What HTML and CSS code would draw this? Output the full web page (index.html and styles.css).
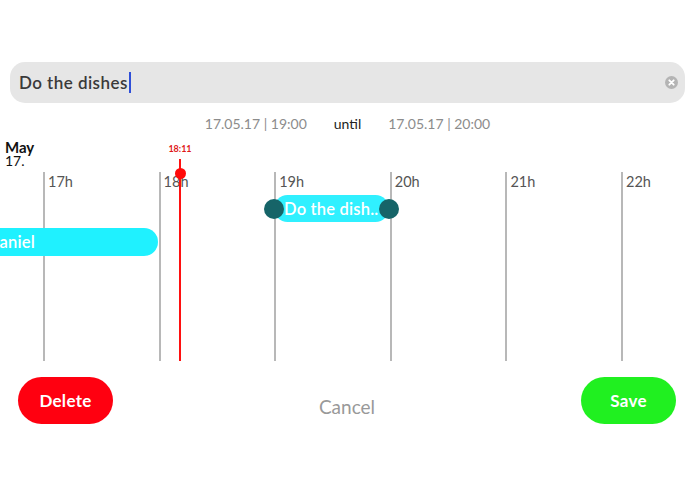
FILE: index.html
```html
<!DOCTYPE html>
<html>
<head>
<meta charset="utf-8">
<link rel="stylesheet" href="styles.css">
</head>
<body>
<div class="page">
  <div class="input">
    <span class="input-text">Do the dishes</span><span class="caret"></span>
    <svg class="clear" width="13" height="13" viewBox="0 0 13 13"><circle cx="6.5" cy="6.5" r="6.5" fill="#b4b4b4"/><path d="M4.3 4.3 L8.7 8.7 M8.7 4.3 L4.3 8.7" stroke="#fff" stroke-width="1.8" stroke-linecap="round"/></svg>
  </div>
  <div class="dates">
    <span class="date">17.05.17 | 19:00</span>
    <span class="until">until</span>
    <span class="date">17.05.17 | 20:00</span>
  </div>
  <div class="timeline">
    <div class="day"><span class="month">May</span><span class="daynum">17.</span></div>
    <div class="hours">
      <div class="hour"><span class="hour-label">17h</span></div>
      <div class="hour"><span class="hour-label">18h</span></div>
      <div class="hour"><span class="hour-label">19h</span></div>
      <div class="hour"><span class="hour-label">20h</span></div>
      <div class="hour"><span class="hour-label">21h</span></div>
      <div class="hour"><span class="hour-label">22h</span></div>
    </div>
    <div class="now">
      <span class="now-label">18:11</span>
      <span class="now-line"></span>
      <span class="now-dot"></span>
    </div>
    <div class="event event-other"><span class="event-text">Daniel</span></div>
    <div class="event event-selected">
      <span class="event-text">Do the dish..</span>
      <span class="handle handle-start"></span>
      <span class="handle handle-end"></span>
    </div>
  </div>
  <div class="actions">
    <button class="btn btn-delete">Delete</button>
    <button class="btn-cancel">Cancel</button>
    <button class="btn btn-save">Save</button>
  </div>
</div>
</body>
</html>
```

FILE: styles.css
```css
html, body {
  margin: 0;
  padding: 0;
  background: #ffffff;
}
body {
  font-family: "Lato", "Open Sans", sans-serif;
  color: #222;
  width: 695px;
  height: 494px;
  overflow: hidden;
}
.page {
  display: flex;
  flex-direction: column;
  padding-top: 62px;
}
.input {
  margin: 0 10px;
  height: 41px;
  border-radius: 15px;
  background: #e6e6e6;
  display: flex;
  align-items: center;
  padding: 0 7px 0 9px;
}
.input-text {
  font-size: 17px;
  font-weight: 600;
  color: #3a3a3a;
  letter-spacing: 0.45px;
}
.caret {
  width: 2px;
  height: 21px;
  background: #2f4fd8;
  margin-left: 1px;
}
.clear {
  margin-left: auto;
}
.dates {
  margin-top: 10px;
  height: 20px;
  display: flex;
  justify-content: center;
  align-items: center;
  gap: 27px;
  font-size: 14px;
}
.date {
  color: #8c8c8c;
}
.until {
  color: #222;
}
.timeline {
  position: relative;
  margin-top: 1px;
  height: 227px;
  overflow: hidden;
}
.day {
  position: absolute;
  left: 5px;
  top: 7px;
  display: flex;
  flex-direction: column;
  color: #111;
}
.month {
  font-size: 15px;
  line-height: 13px;
  font-weight: 700;
}
.daynum {
  font-size: 14px;
  line-height: 13px;
}
.hours {
  display: flex;
  padding-left: 43px;
  padding-top: 38px;
  height: 189px;
}
.hour {
  flex: 0 0 115.6px;
  border-left: 2px solid #b8b8b8;
  box-sizing: border-box;
  height: 189px;
}
.hour-label {
  display: block;
  padding-left: 3px;
  margin-top: 1px;
  font-size: 14.5px;
  color: #555;
  line-height: 18px;
}
.now {
  position: absolute;
  left: 168px;
  top: 9px;
  width: 24px;
  height: 218px;
}
.now-label {
  display: block;
  text-align: center;
  font-size: 9px;
  font-weight: 700;
  color: #e01818;
  line-height: 12px;
}
.now-line {
  position: absolute;
  left: 11px;
  top: 16px;
  width: 2px;
  height: 202px;
  background: #ff1010;
}
.now-dot {
  position: absolute;
  left: 6.5px;
  top: 24.5px;
  width: 11px;
  height: 11px;
  border-radius: 50%;
  background: #ff0a0a;
}
.event {
  position: absolute;
  height: 28px;
  border-radius: 14px;
  display: flex;
  align-items: center;
  color: #fff;
  font-size: 16.5px;
  font-weight: 600;
  letter-spacing: 0.2px;
  white-space: nowrap;
}
.event-other {
  left: -24px;
  width: 182px;
  top: 94px;
  background: #1ff1ff;
  padding-left: 11px;
  box-sizing: border-box;
}
.event-selected {
  left: 274px;
  width: 115px;
  top: 61px;
  height: 27px;
  background: #30f0ff;
  padding-left: 10px;
  box-sizing: border-box;
}
.handle {
  position: absolute;
  top: 3.5px;
  width: 20px;
  height: 20px;
  border-radius: 50%;
  background: #166468;
}
.handle-start {
  left: -10px;
}
.handle-end {
  right: -10px;
}
.actions {
  margin-top: 16px;
  display: flex;
  align-items: center;
  justify-content: space-between;
  padding: 0 19px 0 18px;
}
.btn {
  width: 95px;
  height: 47px;
  border: none;
  border-radius: 24px;
  color: #fff;
  font-family: inherit;
  font-size: 17px;
  font-weight: 700;
  letter-spacing: 0.3px;
  padding: 0;
}
.btn-delete {
  background: #ff0010;
}
.btn-save {
  background: #20f020;
}
.btn-cancel {
  background: none;
  border: none;
  font-family: inherit;
  font-size: 19px;
  color: #999;
  margin-top: 12px;
  padding: 0;
}
```
